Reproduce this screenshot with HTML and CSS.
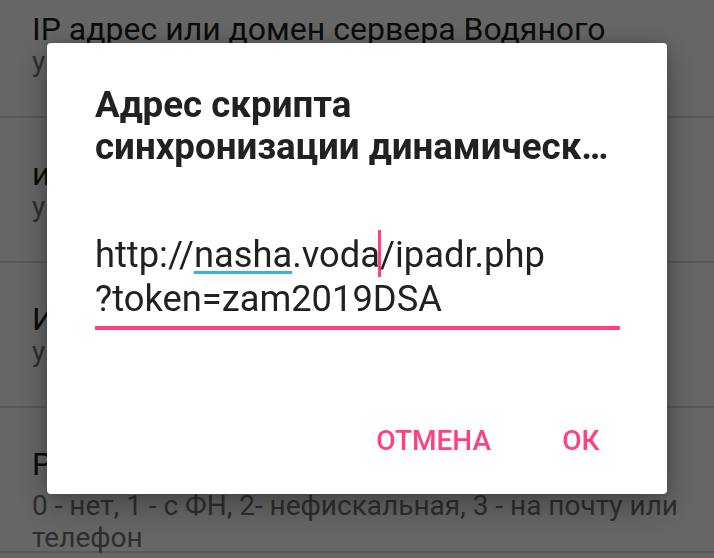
FILE: index.html
```html
<!DOCTYPE html>
<html lang="ru">
<head>
    <meta charset="UTF-8">
    <meta name="viewport" content="width=device-width, initial-scale=1.0">
    <title>Настройки</title>
    <link rel="stylesheet" href="styles.css">
</head>
<body>

    <div class="prefs">
        <div class="pref">
            <div class="pref-title">IP адрес или домен сервера Водяного</div>
            <div class="pref-summary">указывается без http://</div>
        </div>
        <div class="pref">
            <div class="pref-title">имя кассира</div>
            <div class="pref-summary">укажите ФИО</div>
        </div>
        <div class="pref">
            <div class="pref-title">ИНН кассира</div>
            <div class="pref-summary">укажите ИНН</div>
        </div>
        <div class="pref">
            <div class="pref-title">Режим печати чека</div>
            <div class="pref-summary pref-summary-long">0 - нет, 1 - с ФН, 2- нефискальная, 3 - на почту или телефон</div>
        </div>
    </div>

    <div class="scrim">
        <div class="dialog">
            <h2 class="dialog-title">Адрес скрипта<br>синхронизации динамическ…</h2>
            <div class="field">
                <span class="field-line">http://<span class="composing">nasha</span>.voda<span class="cursor"></span>/ipadr.php</span>
                <span class="field-line">?token=zam2019DSA</span>
            </div>
            <div class="dialog-buttons">
                <button class="btn">Отмена</button>
                <button class="btn">ОК</button>
            </div>
        </div>
    </div>

</body>
</html>
```

FILE: styles.css
```css
body {
    font-family: Roboto, "Noto Sans", sans-serif;
    background-color: #fff;
    margin: 0;
    overflow: hidden;
    height: 558px;
}
.prefs {
    margin-top: -27px;
}
.pref {
    height: 145px;
    box-sizing: border-box;
    padding: 39px 16px 0 32px;
    border-bottom: 2px solid #dcdcdc;
}
.pref-title {
    font-size: 32px;
    line-height: 34px;
    color: #1c1c1c;
    white-space: nowrap;
}
.pref-summary {
    font-size: 28px;
    line-height: 32px;
    color: #737373;
}
.pref-summary-long {
    margin-top: 9px;
}
.scrim {
    position: fixed;
    top: 0;
    left: 0;
    right: 0;
    bottom: 0;
    background-color: rgba(0, 0, 0, 0.6);
    display: flex;
    justify-content: center;
    align-items: flex-start;
    padding-top: 43px;
}
.dialog {
    width: 620px;
    height: 451px;
    box-sizing: border-box;
    background-color: white;
    border-radius: 4px;
    padding: 41px 0 0 0;
    box-shadow: 0 12px 34px rgba(0, 0, 0, 0.32), 0 0 12px rgba(0, 0, 0, 0.18);
    display: flex;
    flex-direction: column;
}
.dialog-title {
    margin: 0 48px;
    font-size: 36.7px;
    font-weight: 700;
    line-height: 42px;
    color: #212121;
    white-space: nowrap;
}
.field {
    margin: 65px 47px 0 48px;
    padding-bottom: 6px;
    border-bottom: 4px solid #ff4081;
    font-size: 36.3px;
    line-height: 43px;
    color: #212121;
}
.field-line {
    display: block;
}
.composing {
    text-decoration: underline;
    text-decoration-color: #33b2e3;
    text-decoration-thickness: 3px;
    text-underline-offset: 4px;
}
.cursor {
    display: inline-block;
    width: 3px;
    height: 47px;
    margin: -4px -1.5px 0;
    background-color: #ff4081;
    vertical-align: -10px;
}
.dialog-buttons {
    display: flex;
    justify-content: flex-end;
    gap: 10px;
    margin-top: auto;
    padding: 0 22px 18px 0;
}
.btn {
    min-width: 128px;
    height: 72px;
    padding: 0 16px;
    border: none;
    background: none;
    font-family: Roboto, sans-serif;
    font-size: 28px;
    font-weight: 500;
    text-transform: uppercase;
    color: #ff4081;
    cursor: pointer;
}
```
